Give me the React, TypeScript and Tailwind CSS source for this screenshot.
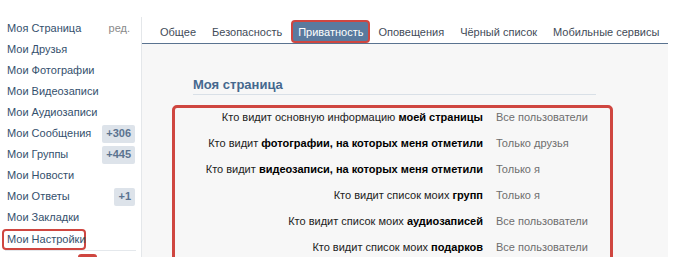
const MENU: { label: string; badge?: string; edit?: boolean }[] = [
  { label: "Моя Страница", edit: true },
  { label: "Мои Друзья" },
  { label: "Мои Фотографии" },
  { label: "Мои Видеозаписи" },
  { label: "Мои Аудиозаписи" },
  { label: "Мои Сообщения", badge: "+306" },
  { label: "Мои Группы", badge: "+445" },
  { label: "Мои Новости" },
  { label: "Мои Ответы", badge: "+1" },
  { label: "Мои Закладки" },
];

const TABS = ["Общее", "Безопасность", "Приватность", "Оповещения", "Чёрный список", "Мобильные сервисы"];

const ROWS: { pre: string; bold: string; value: string }[] = [
  { pre: "Кто видит основную информацию ", bold: "моей страницы", value: "Все пользователи" },
  { pre: "Кто видит ", bold: "фотографии, на которых меня отметили", value: "Только друзья" },
  { pre: "Кто видит ", bold: "видеозаписи, на которых меня отметили", value: "Только я" },
  { pre: "Кто видит список моих ", bold: "групп", value: "Только я" },
  { pre: "Кто видит список моих ", bold: "аудиозаписей", value: "Все пользователи" },
  { pre: "Кто видит список моих ", bold: "подарков", value: "Все пользователи" },
];

export default function App() {
  return (
    <div className="relative flex h-[257px] w-[691px] overflow-hidden whitespace-nowrap bg-white font-['Liberation_Sans',Arial,sans-serif] text-[11px]">
      {/* left menu */}
      <div className="relative w-[141px] shrink-0 pt-[18px]">
        {MENU.map((item) => (
          <div key={item.label} className="flex h-[21px] items-center justify-between pl-[7px] pr-[6px]">
            <span className="text-[#34506d]">{item.label}</span>
            {item.edit && <span className="pr-[5px] text-[#8a8a8a]">ред.</span>}
            {item.badge && (
              <span className="flex h-[18px] items-center rounded-[2px] bg-[#dde3ea] px-[4px] font-bold text-[#5b7390]">
                {item.badge}
              </span>
            )}
          </div>
        ))}
        <div className="ml-[2px] mt-[1px] flex h-[21px] w-[84px] items-center rounded-[4px] border-[2px] border-[#cf4640] pl-[3px] text-[#34506d]">
          Мои Настройки
        </div>
        <div className="ml-[5px] w-[131px] border-t border-[#e4e8ec]" />
        <div className="absolute left-[78px] top-[254px] h-[10px] w-[19px] rounded-t-[3px] bg-[#cf4640]" />
      </div>

      {/* right column */}
      <div className="mt-[17px] flex w-[527px] shrink-0 flex-col border-l border-[#e4e7ea]">
        <div className="flex h-[29px] items-start border-b border-[#5a7390] pl-[10px] pt-[3px]">
          {TABS.map((t) =>
            t === "Приватность" ? (
              <div
                key={t}
                className="ml-[1px] flex h-[23px] items-center rounded-[4px] border-[2px] border-[#cf4640] bg-[#5a7a9e] px-[5px] pt-[2px] text-white"
              >
                {t}
              </div>
            ) : (
              <div key={t} className="flex h-[23px] items-center border-[2px] border-transparent px-[6px] pt-[2px] text-[#3f4b58]">
                {t}
              </div>
            )
          )}
        </div>

        <div className="flex-1 bg-[#f7f7f7] pt-[33px]">
          <div className="ml-[51px] w-[403px] border-b border-[#d9e0e7] pb-[1px] text-[13px] font-bold leading-[16px] text-[#45688e]">
            Моя страница
          </div>
          <div className="ml-[30px] mt-[10px] h-[160px] w-[441px] rounded-[5px] border-[3px] border-[#cf4640]">
            {ROWS.map((r) => (
              <div key={r.bold} className="flex h-[26px] items-start pt-[1px] leading-[16px]">
                <div className="w-[308px] shrink-0 text-right text-[#222]">
                  {r.pre}
                  <b className="text-black">{r.bold}</b>
                </div>
                <div className="pl-[13px] text-[#6e6e6e]">{r.value}</div>
              </div>
            ))}
          </div>
        </div>
      </div>
    </div>
  );
}
